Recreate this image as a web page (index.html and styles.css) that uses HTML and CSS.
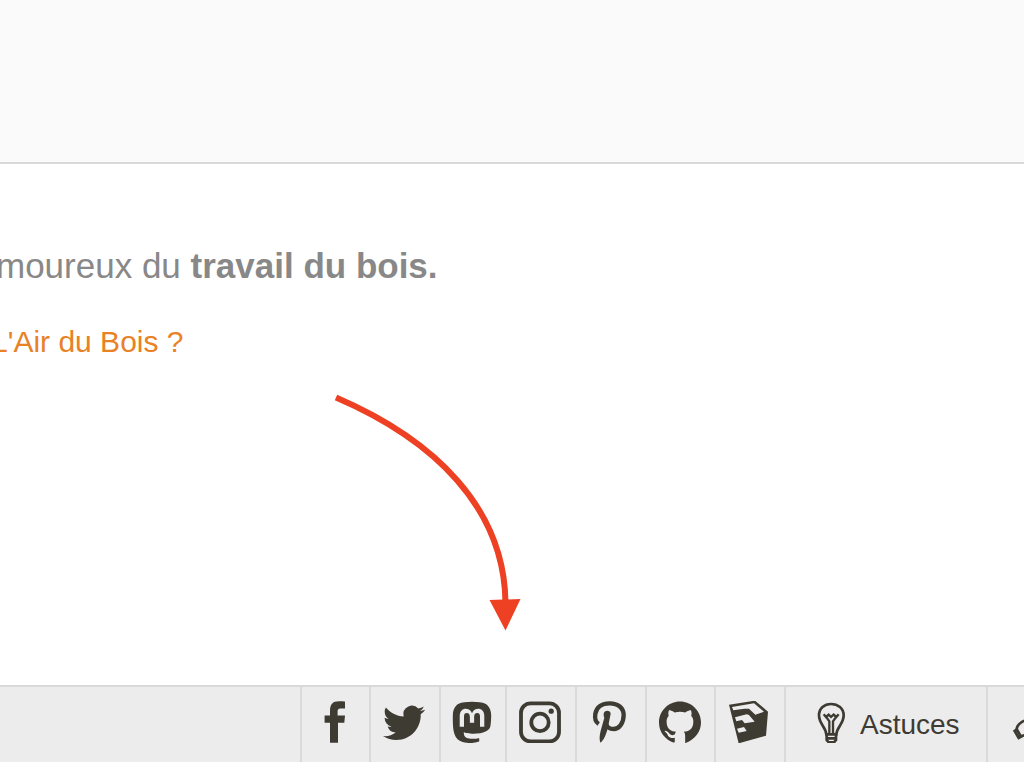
FILE: index.html
```html
<!DOCTYPE html>
<html lang="fr">
<head>
    <meta charset="UTF-8">
    <meta name="viewport" content="width=device-width, initial-scale=1.0">
    <title>L'Air du Bois</title>
    <link rel="stylesheet" href="styles.css">
</head>
<body>
    <header class="banner"></header>

    <main class="intro">
        <p class="tagline">moureux du <strong>travail du bois.</strong></p>
        <p class="about"><a href="#">L'Air du Bois ?</a></p>
        <svg class="arrow" viewBox="330 390 200 250" aria-hidden="true">
            <path class="arrow-line" d="M336 397.500C435 440 504 508 505.500 602"/>
            <path class="arrow-head" d="M489.500 600L520.500 599L505.500 630.500Z"/>
        </svg>
    </main>

    <footer class="footbar">
        <a class="social facebook" href="#" aria-label="Facebook">
            <svg class="icon" viewBox="0 0 42 42"><path d="M31 .6V7.500H27C24 7.500 23.600 8.800 23.600 11V14.500H31L30.300 21.700H24V41.700H16V21.700H10.600V14.500H16V10C16 3.500 18.500.3 25 .3C28 .3 30 .4 31 .6Z"/></svg>
        </a>
        <a class="social" href="#" aria-label="Twitter">
            <svg class="icon" viewBox="0 -0.500 24 24"><path d="M23.953 4.570a10 10 0 01-2.825.775 4.958 4.958 0 002.163-2.723c-.951.555-2.005.959-3.127 1.184a4.920 4.920 0 00-8.384 4.482C7.690 8.095 4.067 6.130 1.640 3.162a4.822 4.822 0 00-.666 2.475c0 1.710.870 3.213 2.188 4.096a4.904 4.904 0 01-2.228-.616v.060a4.923 4.923 0 003.946 4.827 4.996 4.996 0 01-2.212.085 4.936 4.936 0 004.604 3.417 9.867 9.867 0 01-6.102 2.105c-.390 0-.779-.023-1.170-.067a13.995 13.995 0 007.557 2.209c9.053 0 13.998-7.496 13.998-13.985 0-.210 0-.420-.015-.630A9.935 9.935 0 0024 4.590z"/></svg>
        </a>
        <a class="social mastodon" href="#" aria-label="Mastodon">
            <svg class="icon" viewBox="0 -0.500 24 24.500"><path d="M23.193 7.879c0-5.206-3.411-6.732-3.411-6.732C18.062.357 15.108.025 12.041 0h-.076c-3.068.025-6.020.357-7.740 1.147 0 0-3.411 1.526-3.411 6.732 0 1.192-.023 2.618.015 4.129.124 5.092.934 10.109 5.641 11.355 2.170.574 4.034.695 5.535.612 2.722-.150 4.250-.972 4.250-.972l-.090-1.975s-1.945.613-4.129.539c-2.165-.074-4.449-.233-4.799-2.891a5.499 5.499 0 0 1-.048-.745s2.125.520 4.817.643c1.646.075 3.190-.097 4.758-.283 3.007-.359 5.625-2.212 5.954-3.905.517-2.665.475-6.507.475-6.507zm-4.024 6.709h-2.497V8.469c0-1.290-.543-1.944-1.628-1.944-1.200 0-1.802.776-1.802 2.312v3.349h-2.483v-3.350c0-1.536-.602-2.312-1.802-2.312-1.085 0-1.628.655-1.628 1.944v6.119H4.832V8.284c0-1.289.328-2.313.987-3.070.680-.758 1.569-1.146 2.674-1.146 1.278 0 2.246.491 2.886 1.474L12 6.585l.622-1.043c.640-.983 1.608-1.474 2.886-1.474 1.104 0 1.994.388 2.674 1.146.658.757.986 1.781.986 3.070v6.304z"/></svg>
        </a>
        <a class="social" href="#" aria-label="Instagram">
            <svg class="icon outline" viewBox="0 0 42 42" stroke-width="3.800">
                <rect x="2" y="2.400" width="38" height="38" rx="9.500"/>
                <circle cx="21" cy="21.400" r="8.700"/>
                <circle class="dot" cx="32.200" cy="10.200" r="2.600"/>
            </svg>
        </a>
        <a class="social" href="#" aria-label="Pinterest">
            <svg class="icon" viewBox="60 63 126 126">
                <path class="stroke" stroke-width="13" d="M89 132C80 126 77 113 79 102C82 81 99 70 122 70C147 70 164 84 164 105C164 130 150 147 134 147C122 147 113 141 112 132"/>
                <path d="M104 101C105 89 125 89 125 101L119 131C115 153 108 176 95 188C90 180 92 165 95 152L106 113C104 109 104 105 104 101Z"/>
            </svg>
        </a>
        <a class="social github" href="#" aria-label="GitHub">
            <svg class="icon" viewBox="0 0 24 24"><path d="M12 .297c-6.630 0-12 5.373-12 12 0 5.303 3.438 9.800 8.205 11.385.600.113.820-.258.820-.577 0-.285-.010-1.040-.015-2.040-3.338.724-4.042-1.610-4.042-1.610C4.422 18.070 3.633 17.700 3.633 17.700c-1.087-.744.084-.729.084-.729 1.205.084 1.838 1.236 1.838 1.236 1.070 1.835 2.809 1.305 3.495.998.108-.776.417-1.305.760-1.605-2.665-.300-5.466-1.332-5.466-5.930 0-1.310.465-2.380 1.235-3.220-.135-.303-.540-1.523.105-3.176 0 0 1.005-.322 3.300 1.230.960-.267 1.980-.399 3-.405 1.020.006 2.040.138 3 .405 2.280-1.552 3.285-1.230 3.285-1.230.645 1.653.240 2.873.120 3.176.765.840 1.230 1.910 1.230 3.220 0 4.610-2.805 5.625-5.475 5.920.420.360.810 1.096.810 2.220v4.286C20.565 22.092 24 17.592 24 12.297c0-6.627-5.373-12-12-12"/></svg>
        </a>
        <a class="social" href="#" aria-label="SketchUp">
            <svg class="icon" viewBox="15 15 126 126">
                <path fill-rule="evenodd" d="M18 26L96 14L135 47L129 119L47 142Z M27 33L31 43L64 38L78 38L97 56L123 47L93 22Z M36 64L40 76L57 72L65 82L95 77L78 57L71 55Z M42 98L47 110L71 105L63 93Z"/>
            </svg>
        </a>
        <a class="link tips" href="#">
            <svg class="icon outline" viewBox="315 63 126 126" stroke-width="8">
                <path d="M364 163C362 140 342 132 342 106C342 85 358 72 378 72C399 72 416 85 416 106C416 132 396 140 394 163Z"/>
                <path d="M365 163V180L371 187H387L393 180V163M366 175H392"/>
                <path stroke-width="7" d="M356 103L363 111L371 104L378 111L386 104L394 111L401 103M363 110L373 124V163M394 110L384 124V163"/>
            </svg>
            <span>Astuces</span>
        </a>
        <a class="link more" href="#" aria-label="Annonces">
            <svg class="icon outline" viewBox="486 63 126 126" stroke-width="8">
                <path d="M494 153L501 149L513 170L506 174Z"/>
                <path d="M499 149C502 132 512 126 526 121L578 79L607 148L535 162L512 169M526 121L542 160"/>
            </svg>
        </a>
    </footer>
</body>
</html>
```
FILE: styles.css
```css
* {
    box-sizing: border-box;
    margin: 0;
    padding: 0;
}

body {
    display: flex;
    flex-direction: column;
    min-height: 100vh;
    overflow-x: hidden;
    background-color: #fff;
    color: #3e3b33;
    font-family: "Liberation Sans", Arial, Helvetica, sans-serif;
    font-size: 28px;
}

a {
    color: inherit;
    text-decoration: none;
}

.banner {
    height: 164px;
    background-color: #fafafa;
    border-bottom: 2px solid #d9d9d9;
}

.intro {
    position: relative;
    flex: 1;
    padding-top: 82px;
    overflow: hidden;
    line-height: 40px;
    white-space: nowrap;
}

.tagline {
    margin-left: -4px;
    color: #888;
    font-size: 35px;
}

.about {
    margin-top: 36px;
    margin-left: -9px;
    color: #e98125;
    font-size: 30px;
}

/* red pointer over the page */
.arrow {
    position: absolute;
    top: 226px;
    left: 330px;
    width: 200px;
    height: 250px;
}
.arrow-line {
    fill: none;
    stroke: #ee4023;
    stroke-width: 6;
}
.arrow-head {
    fill: #ee4023;
}

.footbar {
    display: flex;
    justify-content: flex-end;
    overflow: hidden;
    background-color: #ececec;
    border-top: 2px solid #d9d9d9;
}
.footbar a {
    display: flex;
    flex-shrink: 0;
    align-items: center;
    padding-top: 14px;
    padding-bottom: 19px;
    border-left: 2px solid #dadada;
}
.footbar .social {
    justify-content: center;
    width: 70px;
    padding-right: 2px;
}
.footbar .facebook,
.footbar .github {
    width: 69px;
}
.footbar .mastodon {
    width: 66px;
}
.footbar .link {
    gap: 8px;
    padding-left: 24px;
}
.footbar .tips {
    width: 202px;
}
.footbar .more {
    width: 38px;
}
.tips span {
    padding-top: 6px;
}

.icon {
    flex-shrink: 0;
    width: 42px;
    height: 42px;
    fill: #3e3b33;
}
.outline {
    fill: none;
    stroke: #3e3b33;
}
.icon .stroke {
    fill: none;
    stroke: #3e3b33;
}
.icon .dot {
    fill: #3e3b33;
    stroke: none;
}
```
